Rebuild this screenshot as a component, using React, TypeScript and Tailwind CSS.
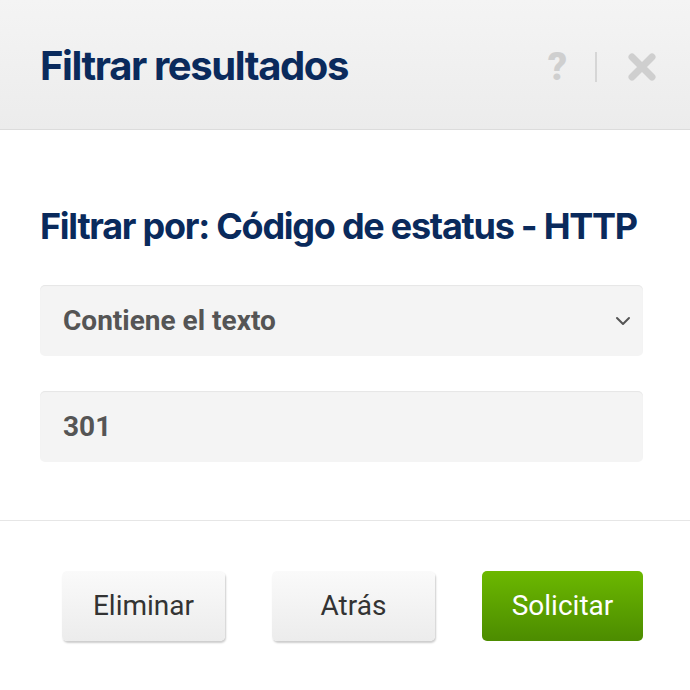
import { ChevronDown } from 'lucide-react'

const heading = "font-['Inter',sans-serif] font-bold text-[#0a2a5c] tracking-[-0.035em]"
const body = "font-['Roboto',sans-serif]"

export default function App() {
  return (
    <div className="w-[690px] h-[690px] bg-white overflow-hidden">
      {/* Header */}
      <header className="h-[130px] flex items-center justify-between pl-10 pr-[33px] bg-gradient-to-b from-[#f4f4f4] to-[#ececec] border-b border-[#dcdcdc]">
        <h1 className={`${heading} text-[40px] leading-none mt-[2px]`}>Filtrar resultados</h1>
        <div className="flex items-center mt-[4px]">
          <span className={`${body} text-[38px] font-black text-[#cfcfcf] leading-none`}>?</span>
          <div className="w-[2px] h-[30px] bg-[#d6d6d6] ml-[28px] mr-[30px]" />
          <svg width="30" height="30" viewBox="0 0 30 30">
            <path d="M5 5 L25 25 M25 5 L5 25" stroke="#cfcfcf" strokeWidth="7" strokeLinecap="round" />
          </svg>
        </div>
      </header>

      {/* Body */}
      <section className="px-10 pt-[78px] pb-[58px] border-b border-[#e6e6e6]">
        <h2 className={`${heading} text-[36px] leading-none mb-[41px]`}>Filtrar por: Código de estatus - HTTP</h2>
        <div className="w-[603px] h-[71px] rounded-[5px] bg-[#f4f4f4] shadow-[inset_0_1px_1px_rgba(0,0,0,0.06)] flex items-center justify-between pl-[23px] pr-[8px] mb-[35px]">
          <span className={`${body} font-bold text-[28px] text-[#555]`}>Contiene el texto</span>
          <ChevronDown size={24} strokeWidth={2} className="text-[#555]" />
        </div>
        <div className="w-[603px] h-[71px] rounded-[5px] bg-[#f4f4f4] shadow-[inset_0_1px_1px_rgba(0,0,0,0.06)] flex items-center pl-[23px]">
          <span className={`${body} font-bold text-[28px] text-[#555]`}>301</span>
        </div>
      </section>

      {/* Footer */}
      <footer className="flex justify-end gap-[47px] pr-[47px] pt-[50px]">
        <button className={`${body} w-[163px] h-[70px] rounded-[5px] bg-gradient-to-b from-[#fafafa] to-[#ececec] shadow-[1px_2px_2px_rgba(0,0,0,0.2)] text-[28px] text-[#333]`}>Eliminar</button>
        <button className={`${body} w-[163px] h-[70px] rounded-[5px] bg-gradient-to-b from-[#fafafa] to-[#ececec] shadow-[1px_2px_2px_rgba(0,0,0,0.2)] text-[28px] text-[#333]`}>Atrás</button>
        <button className={`${body} w-[161px] h-[70px] rounded-[5px] bg-gradient-to-b from-[#6cb800] to-[#4c8c00] text-[28px] text-white`}>Solicitar</button>
      </footer>
    </div>
  )
}
